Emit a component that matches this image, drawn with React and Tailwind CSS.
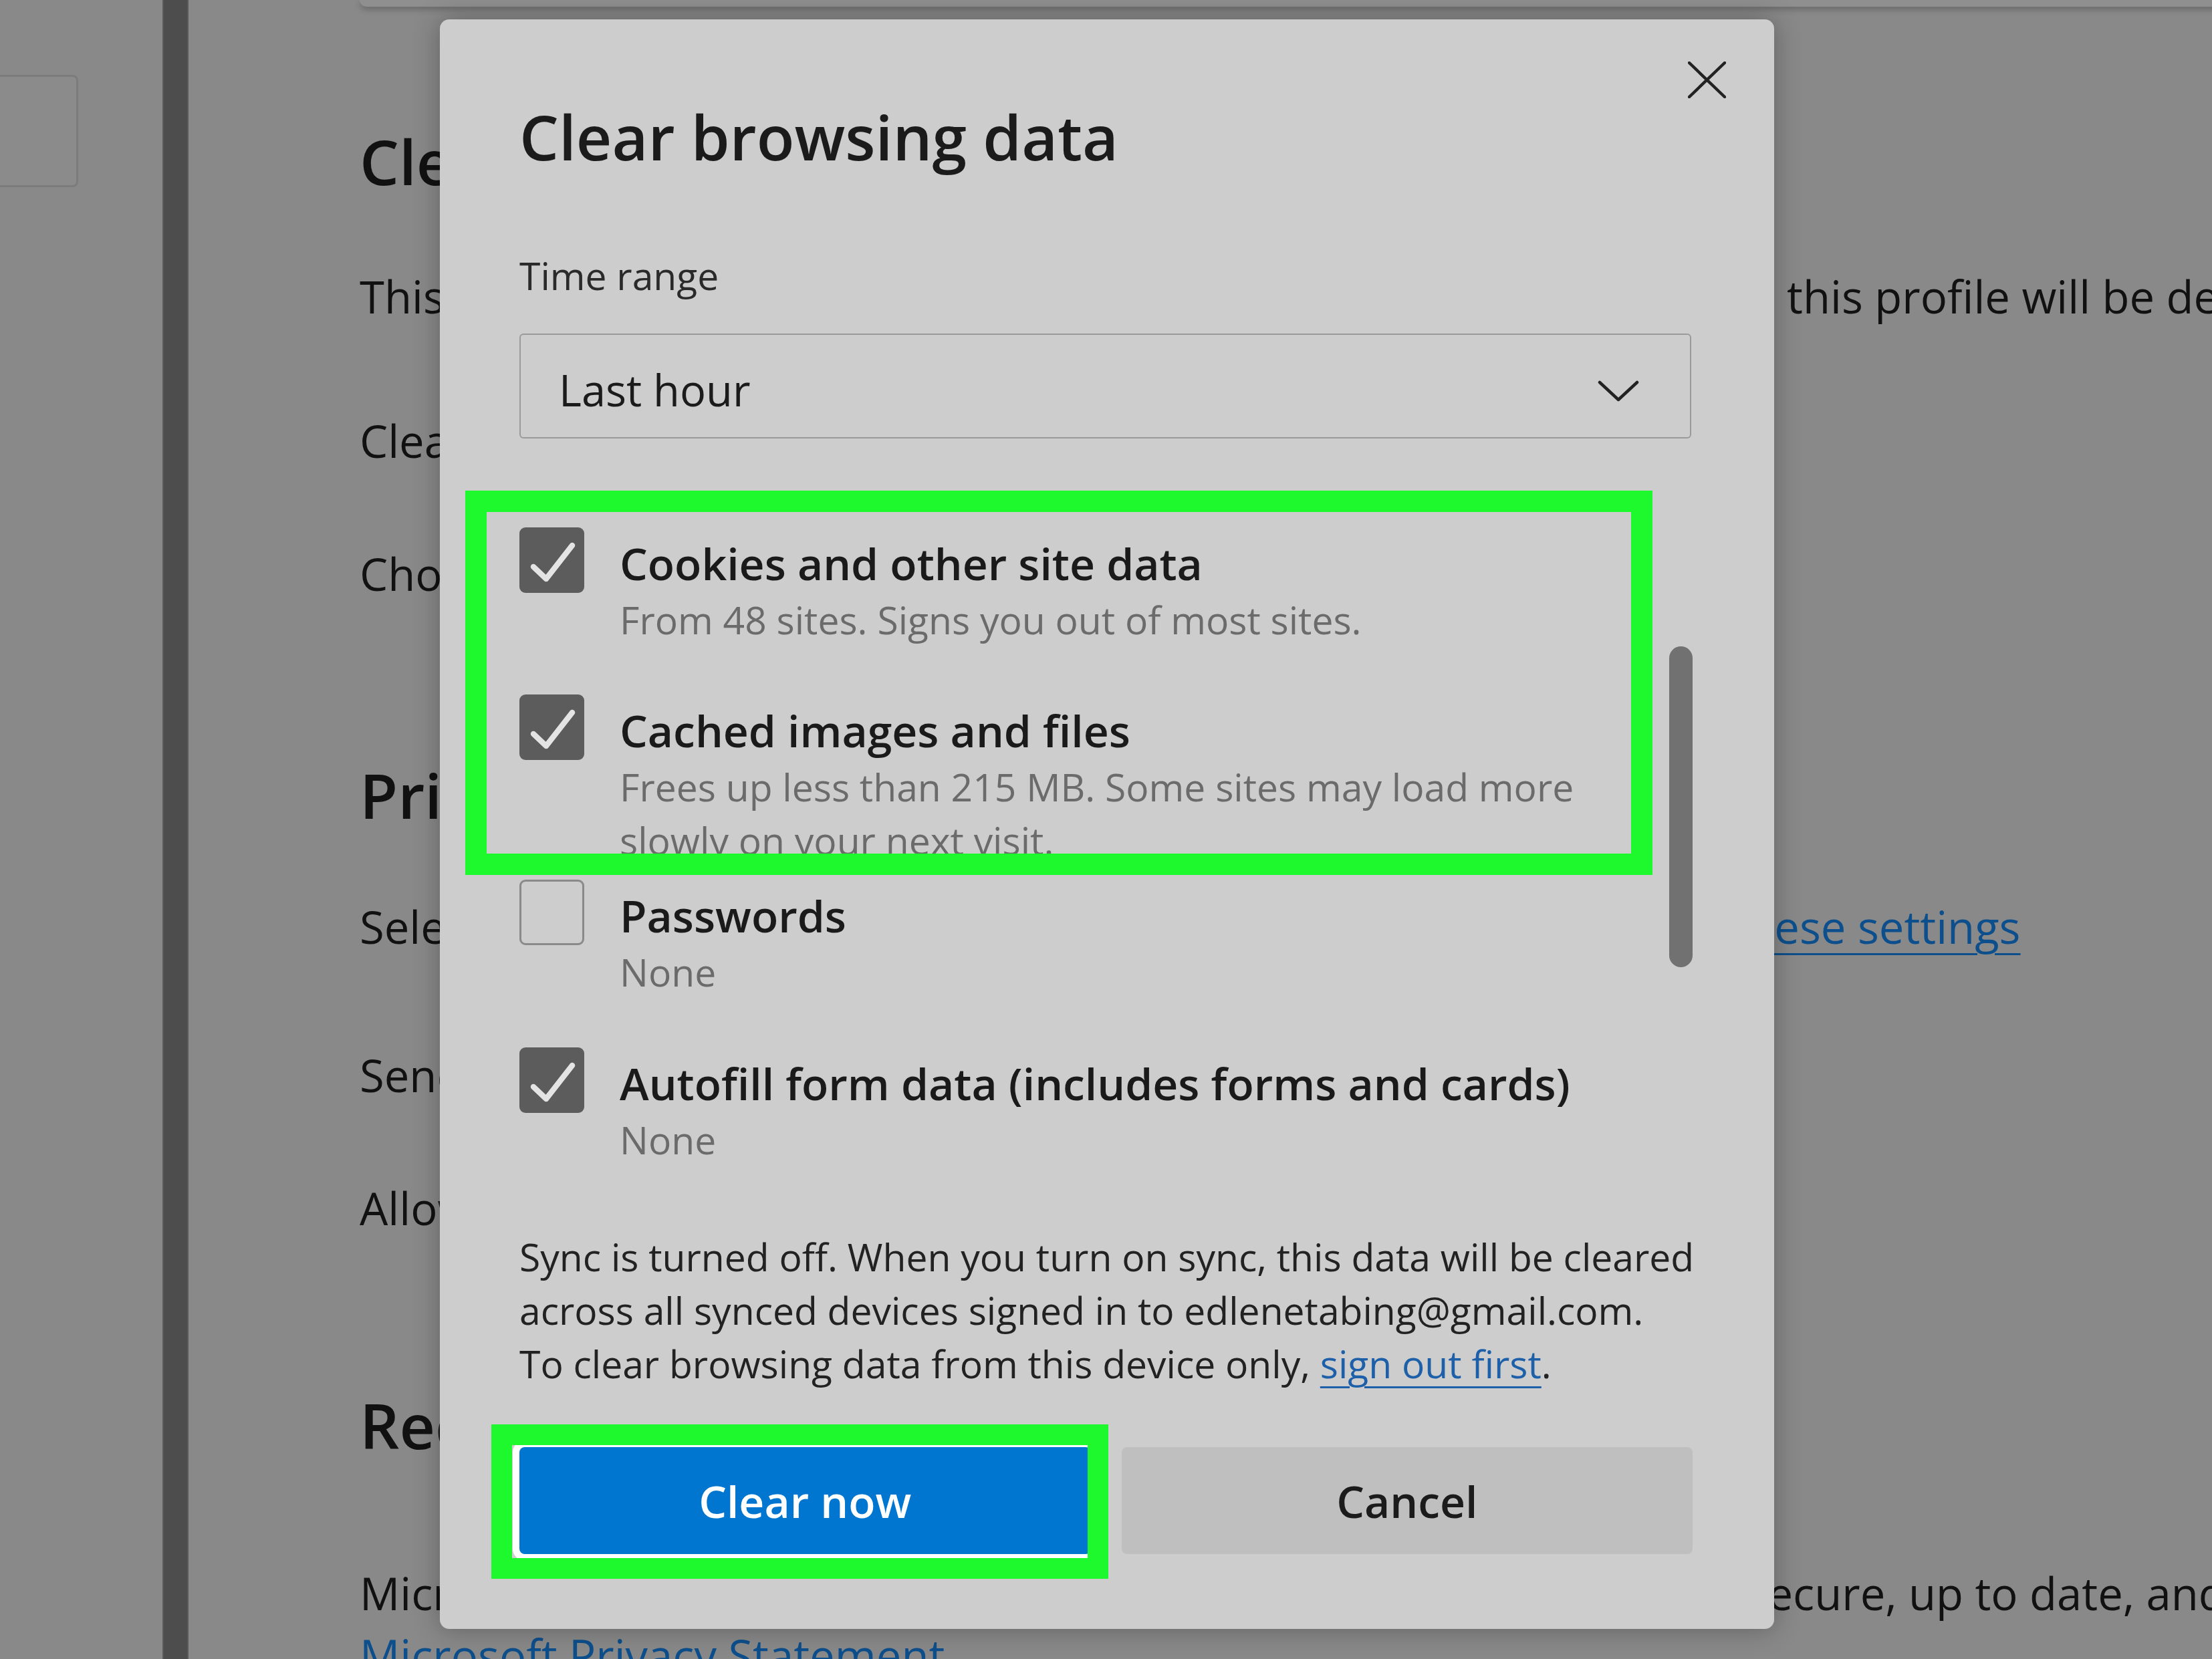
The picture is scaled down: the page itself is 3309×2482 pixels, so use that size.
import { useState } from "react";

function Checkbox({ checked }) {
  if (!checked) {
    return (
      <div className="w-[97px] h-[98px] shrink-0 rounded-[9px] border-[3px] border-[#8a8a8a] bg-[#cdcdcd]" />
    );
  }
  return (
    <div className="w-[97px] h-[98px] shrink-0 rounded-[9px] bg-[#5c5c5c] flex items-center justify-center">
      <svg width="97" height="98" viewBox="0 0 97 98" fill="none">
        <path
          d="M21 59 L40 77 L79 27"
          stroke="#e4e4e4"
          strokeWidth="8.5"
          strokeLinecap="round"
          strokeLinejoin="round"
        />
      </svg>
    </div>
  );
}

function DataItem({ item, height }) {
  return (
    <div className={`flex gap-[53px] ${height}`}>
      <Checkbox checked={item.checked} />
      <div className="pt-[9px]">
        <div className="text-[66px] leading-[89px] font-semibold text-[#1a1a1a] whitespace-nowrap">
          {item.label}
        </div>
        {item.desc.map((line) => (
          <div
            key={line}
            className="text-[57px] leading-[80px] text-[#6b6b6b] whitespace-nowrap"
          >
            {line}
          </div>
        ))}
      </div>
    </div>
  );
}

export default function App() {
  const [items] = useState([
    {
      label: "Cookies and other site data",
      desc: ["From 48 sites. Signs you out of most sites."],
      checked: true,
      height: "h-[250px]",
    },
    {
      label: "Cached images and files",
      desc: [
        "Frees up less than 215 MB. Some sites may load more",
        "slowly on your next visit.",
      ],
      checked: true,
      height: "h-[277px]",
    },
    {
      label: "Passwords",
      desc: ["None"],
      checked: false,
      height: "h-[251px]",
    },
    {
      label: "Autofill form data (includes forms and cards)",
      desc: ["None"],
      checked: true,
      height: "h-[273px]",
    },
  ]);

  const body = "text-[67px] leading-[80px] text-[#111] whitespace-nowrap";
  const link =
    "text-[67px] leading-[80px] text-[#0d4f8c] whitespace-nowrap underline decoration-[3px] underline-offset-[14px]";
  const heading =
    "text-[93px] leading-[120px] font-semibold text-[#111] whitespace-nowrap";

  return (
    <div className="relative w-[3309px] h-[2482px] overflow-hidden bg-[#898989] font-['Open_Sans',sans-serif]">
      {/* Page behind the dialog */}
      <div className="flex h-full">
        {/* left nav */}
        <div className="w-[243px] shrink-0">
          <div className="mt-[112px] w-[117px] h-[168px] rounded-r-[8px] border-[3px] border-l-0 border-[#7c7c7c] bg-[#8b8b8b]" />
        </div>
        <div className="w-[39px] shrink-0 bg-[#4d4d4d] border-x-2 border-[#5a5a5a]" />

        {/* settings content */}
        <div className="flex-1 pl-[256px]">
          <div className="h-[10px] rounded-bl-[14px] bg-[#8f8f8f] shadow-[0_4px_10px_rgba(0,0,0,0.25)]" />
          <div className={`${heading} mt-[171px]`}>Clear browsing data</div>
          <div className={`${body} mt-[102px]`}>
            This includes history, passwords, cookies, and more. Only data from
            this profile will be deleted. Manage your data
          </div>
          <div className={`${body} mt-[136px]`}>Clear browsing data now</div>
          <div className={`${body} mt-[119px]`}>
            Choose what to clear every time you close the browser
          </div>
          <div className={`${heading} mt-[231px]`}>Privacy</div>
          <div className={`${body} mt-[97px]`}>
            Select your privacy settings for Microsoft Edge.{" "}
            <span className="text-[#0d4f8c] underline decoration-[3px] underline-offset-[14px]">
              Learn more about these settings
            </span>
          </div>
          <div className={`${body} mt-[142px]`}>
            Send "Do Not Track" requests
          </div>
          <div className={`${body} mt-[119px]`}>
            Allow sites to check if you have payment methods saved
          </div>
          <div className={`${heading} mt-[225px]`}>Required diagnostic data</div>
          <div className={`${body} mt-[151px]`}>
            Microsoft collects required diagnostic data to keep Microsoft Edge
            secure, up to date, and performing as expected
          </div>
          <div className={`${link} mt-[13px]`}>Microsoft Privacy Statement</div>
        </div>
      </div>

      {/* Dialog */}
      <div className="absolute left-[658px] top-[29px] w-[1996px] rounded-[14px] bg-[#cdcdcd] pt-[63px] pl-[119px] pr-[122px] pb-[112px] shadow-[0_0_40px_rgba(0,0,0,0.3)]">
        <div className="flex justify-between items-start">
          <h1 className="mt-[52px] text-[93px] leading-[120px] font-semibold text-[#1b1b1b]">
            Clear browsing data
          </h1>
          <button className="-mr-[50px]">
            <svg width="57" height="55" viewBox="0 0 57 55" fill="none">
              <path
                d="M2 2 L55 53 M55 2 L2 53"
                stroke="#222"
                strokeWidth="4.5"
                strokeLinecap="round"
              />
            </svg>
          </button>
        </div>

        <div className="mt-[112px] text-[57px] leading-[72px] text-[#2a2a2a]">
          Time range
        </div>

        <div className="mt-[51px] h-[157px] w-[1753px] rounded-[6px] border-2 border-[#9a9a9a] flex justify-between pl-[57px] pr-[76px]">
          <span className="mt-[37px] text-[65px] leading-[90px] text-[#1b1b1b]">
            Last hour
          </span>
          <svg
            className="mt-[68px]"
            width="62"
            height="32"
            viewBox="0 0 62 32"
            fill="none"
          >
            <path
              d="M3 3 L31 29 L59 3"
              stroke="#222"
              strokeWidth="4.5"
              strokeLinecap="round"
              strokeLinejoin="round"
            />
          </svg>
        </div>

        <div className="mt-[133px]">
          {items.map((item) => (
            <DataItem key={item.label} item={item} height={item.height} />
          ))}
        </div>

        <p className="text-[57px] leading-[80px] text-[#222] whitespace-nowrap">
          Sync is turned off. When you turn on sync, this data will be cleared
          <br />
          across all synced devices signed in to edlenetabing@gmail.com.
          <br />
          To clear browsing data from this device only,{" "}
          <a className="text-[#1d5fa8] underline decoration-[3px] underline-offset-[12px]">
            sign out first
          </a>
          .
        </p>

        <div className="mt-[85px] grid grid-cols-2 gap-[46px]">
          <button className="h-[160px] rounded-[8px] bg-[#0076d1] ring-[10px] ring-white text-[66px] font-semibold text-white">
            Clear now
          </button>
          <button className="h-[160px] rounded-[8px] bg-[#bfbfbf] text-[66px] font-semibold text-[#1b1b1b]">
            Cancel
          </button>
        </div>

        {/* scrollbar thumb */}
        <div className="absolute left-[1839px] top-[938px] w-[35px] h-[480px] rounded-full bg-[#717171]" />

        {/* highlight annotations */}
        <div className="absolute left-[38px] top-[705px] w-[1776px] h-[575px] border-[32px] border-[#1ef92d]" />
        <div className="absolute left-[77px] top-[2102px] w-[923px] h-[231px] border-[31px] border-[#1ef92d]" />
      </div>
    </div>
  );
}
